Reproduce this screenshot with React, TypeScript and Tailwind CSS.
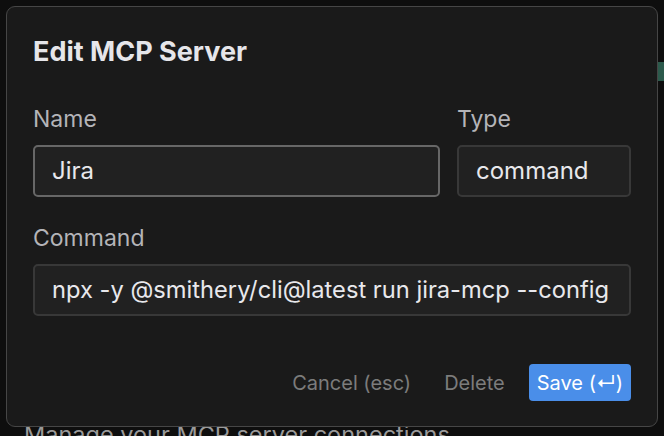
import React from "react";

export default function App() {
  return (
    <div
      className="relative h-[436px] w-[664px] overflow-hidden bg-[#0e0e0e]"
      style={{ fontFamily: "Inter, 'Noto Sans', sans-serif" }}
    >
      {/* background page content */}
      <div className="flex h-full flex-col">
        <div className="ml-auto mt-[62px] h-[19px] w-[6px] bg-[#2c5a4c]" />
        <div className="mt-auto whitespace-nowrap pl-[24px] text-[23.5px] leading-[23px] text-[#9a9a9a] translate-y-[10px]">
          Manage your MCP server connections
        </div>
      </div>

      {/* dialog overlay */}
      <div className="absolute left-[6px] top-[6px] flex h-[421px] w-[652px] flex-col rounded-[9px] border-[1.5px] border-[#464646] bg-[#1a1a1a] px-[26px] pb-[25px] pt-[29px]">
        <h2 className="text-[27px] font-bold leading-[32px] text-[#e6e6ea]">
          Edit MCP Server
        </h2>

        <div className="mt-[37px] flex gap-[17px]">
          <div className="flex w-[407px] flex-col gap-[12px]">
            <label className="text-[23px] leading-[28px] text-[#b4b4b8]">Name</label>
            <div className="flex h-[52px] items-center rounded-[5px] border-2 border-[#676767] bg-[#212121] px-[17px] text-[24px] text-[#e8e8ec]">
              Jira
            </div>
          </div>
          <div className="flex w-[174px] flex-col gap-[12px]">
            <label className="text-[23px] leading-[28px] text-[#b4b4b8]">Type</label>
            <div className="flex h-[52px] items-center rounded-[5px] border-2 border-[#383838] bg-[#212121] px-[17px] text-[24px] text-[#e8e8ec]">
              command
            </div>
          </div>
        </div>

        <div className="mt-[27px] flex flex-col gap-[12px]">
          <label className="text-[23px] leading-[28px] text-[#b4b4b8]">Command</label>
          <div className="flex h-[52px] items-center overflow-hidden whitespace-nowrap rounded-[5px] border-2 border-[#383838] bg-[#212121] px-[17px] text-[23.7px] text-[#e8e8ec]">
            npx -y @smithery/cli@latest run jira-mcp --config
          </div>
        </div>

        <div className="mt-auto flex items-center justify-end gap-[33px]">
          <button className="text-[20px] text-[#7c7c7c]">Cancel (esc)</button>
          <button className="text-[20px] text-[#7c7c7c]">Delete</button>
          <button className="-ml-[9px] flex h-[37px] items-center rounded-[4px] bg-[#4a8ee9] px-[8px] text-[20px] text-white">
            Save (↵)
          </button>
        </div>
      </div>
    </div>
  );
}
